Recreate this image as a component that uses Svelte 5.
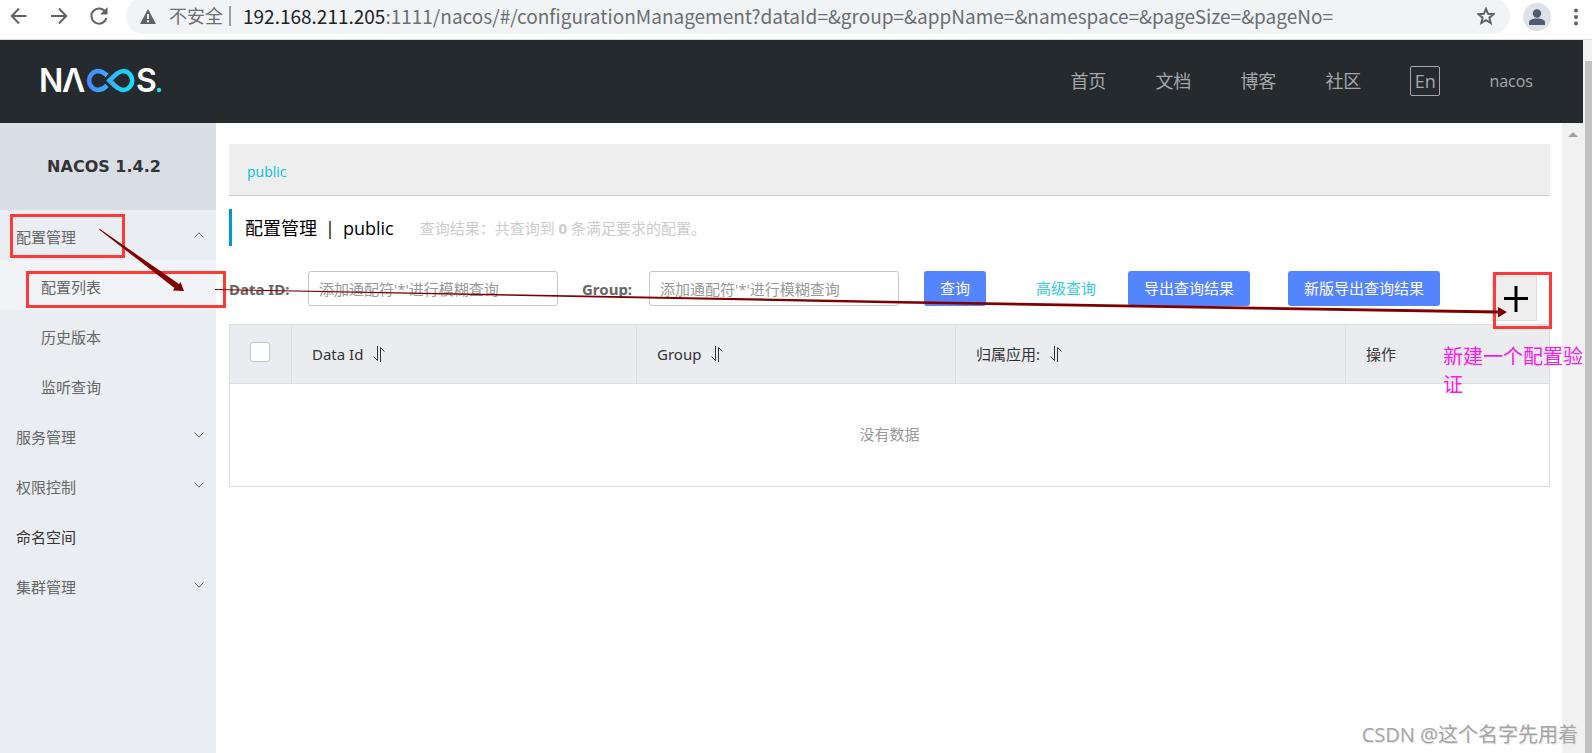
<script>
	const navLinks = ['首页', '文档', '博客', '社区'];

	const menu = [
		{ label: '配置管理', open: true, children: ['配置列表', '历史版本', '监听查询'] },
		{ label: '服务管理', children: [] },
		{ label: '权限控制', children: [] },
		{ label: '命名空间', leaf: true },
		{ label: '集群管理', children: [] }
	];

	const columns = [
		{ name: 'Data Id', cls: 'col-data', sortable: true },
		{ name: 'Group', cls: 'col-group', sortable: true },
		{ name: '归属应用:', cls: 'col-app', sortable: true },
		{ name: '操作', cls: 'col-action', sortable: false }
	];

	let activeItem = $state('配置列表');
	let dataId = $state('');
	let group = $state('');
	let allChecked = $state(false);
</script>

<div class="window">
	<div class="toolbar">
		<div class="tools">
			<button class="icon-btn" aria-label="后退">
				<svg width="18" height="18" viewBox="0 0 18 18"><path d="M16.5 9H2M9 1.5 1.8 9 9 16.5" /></svg>
			</button>
			<button class="icon-btn" aria-label="前进">
				<svg width="18" height="18" viewBox="0 0 18 18"><path d="M1 9h15M9 1.5 16.2 9 9 16.5" /></svg>
			</button>
			<button class="icon-btn" aria-label="刷新">
				<svg width="18" height="18" viewBox="0 0 18 18">
					<path d="M15.5 5A7.6 7.6 0 1 0 16.4 11" />
					<path class="solid" d="M17.5 0v7.5H10z" />
				</svg>
			</button>
		</div>
		<div class="address">
			<svg class="warn" width="16" height="15" viewBox="0 0 16 15">
				<path d="M8 0 16 15H0z" fill="#5f6368" />
				<path d="M8 5v5M8 11.2v2" stroke="#f1f3f4" stroke-width="2" />
			</svg>
			<span class="insecure">不安全</span>
			<span class="divider"></span>
			<span class="url"
				><b>192.168.211.205</b
				>:1111/nacos/#/configurationManagement?dataId=&amp;group=&amp;appName=&amp;namespace=&amp;pageSize=&amp;pageNo=</span
			>
			<button class="icon-btn star" aria-label="收藏">
				<svg width="18" height="18" viewBox="0 0 18 18">
					<path d="m9 1.8 2.1 5 5.4.4-4.1 3.5 1.3 5.3L9 13.2 4.3 16l1.3-5.3L1.5 7.2l5.4-.4z" />
				</svg>
			</button>
		</div>
		<button class="avatar" aria-label="用户">
			<svg width="28" height="28" viewBox="0 0 28 28">
				<circle cx="14" cy="10.5" r="4.2" />
				<path d="M6 22v-2.5c0-3 4-4 8-4s8 1 8 4V22z" />
			</svg>
		</button>
		<button class="icon-btn dots" aria-label="菜单">
			<svg width="6" height="18" viewBox="0 0 6 18">
				<circle cx="3" cy="2.5" r="2" /><circle cx="3" cy="9" r="2" /><circle cx="3" cy="15.5" r="2" />
			</svg>
		</button>
	</div>

	<div class="viewport">
		<div class="page">
			<header>
				<a class="logo" href="#/" aria-label="NACOS.">
					<svg width="130" height="60" viewBox="-4 -14 130 60">
						<defs>
							<linearGradient id="loop" gradientUnits="userSpaceOnUse" x1="46" y1="0" x2="95" y2="0">
								<stop offset="0" stop-color="#4a86ff" />
								<stop offset="1" stop-color="#14e3f4" />
							</linearGradient>
						</defs>
						<text x="-1" y="27">N</text>
						<text x="22" y="27">Λ</text>
						<g fill="none" stroke="url(#loop)" stroke-width="4.6">
							<path d="M67 10.5C63.5 7 61 6 57.3 6a9.6 9.6 0 0 0 0 19c3.7 0 6.2-1 9.7-4.5" />
							<path d="M69.5 15.5C76 9 79 6 84 6a9.6 9.6 0 0 1 0 19c-5 0-8-3-14.5-9.5z" />
						</g>
						<text x="96" y="27">S</text>
						<circle cx="119" cy="25" r="2.2" fill="#14e3f4" />
					</svg>
				</a>
				<nav>
					{#each navLinks as link}
						<a href="#/">{link}</a>
					{/each}
					<button class="lang">En</button>
					<a class="user" href="#/">nacos</a>
				</nav>
			</header>

			<div class="body">
				<aside>
					<h1>NACOS 1.4.2</h1>
					<ul>
						{#each menu as item}
							<li>
								<button class="item" class:leaf={item.leaf}>
									{item.label}
									{#if !item.leaf}
										<svg class="chevron" width="10" height="6" viewBox="0 0 10 6">
											<path d={item.open ? 'M.5 5.5 5 .8l4.5 4.7' : 'M.5.5 5 5.2 9.5.5'} />
										</svg>
									{/if}
								</button>
								{#if item.open}
									{#each item.children as child}
										<button
											class="item sub"
											class:active={child === activeItem}
											onclick={() => (activeItem = child)}>{child}</button
										>
									{/each}
								{/if}
							</li>
						{/each}
					</ul>
				</aside>

				<main>
					<div class="namespaces"><a href="#/">public</a></div>

					<div class="title">
						<h2>配置管理<i>|</i>public</h2>
						<span>查询结果：共查询到 <strong>0</strong> 条满足要求的配置。</span>
					</div>

					<form class="search" onsubmit={(e) => e.preventDefault()}>
						<div class="field">
							<label for="dataId">Data ID:</label>
							<input id="dataId" type="text" placeholder="添加通配符'*'进行模糊查询" bind:value={dataId} />
						</div>
						<div class="field">
							<label for="group">Group:</label>
							<input id="group" type="text" placeholder="添加通配符'*'进行模糊查询" bind:value={group} />
						</div>
						<button class="primary" type="submit">查询</button>
						<a class="advanced" href="#/">高级查询</a>
						<button class="primary" type="button">导出查询结果</button>
						<button class="primary next" type="button">新版导出查询结果</button>
						<button class="add" type="button" aria-label="新建配置">
							<svg width="26" height="26" viewBox="0 0 26 26"><path d="M14 0v26M2 12.5h24" /></svg>
						</button>
					</form>

					<table>
						<thead>
							<tr>
								<th class="col-check">
									<input type="checkbox" aria-label="全选" bind:checked={allChecked} />
								</th>
								{#each columns as col}
									<th class={col.cls}>
										{col.name}
										{#if col.sortable}
											<svg class="sort" width="14" height="16" viewBox="0 0 14 16">
												<path d="M5.5 0v14.5L1.5 10.5M8.5 16V1.5L12.5 5.5" />
											</svg>
										{/if}
									</th>
								{/each}
							</tr>
						</thead>
						<tbody>
							<tr><td colspan="5">没有数据</td></tr>
						</tbody>
					</table>
				</main>

				<div class="inner-scroll"><span class="up"></span></div>
			</div>
		</div>
		<div class="outer-scroll"><div class="thumb"></div></div>
	</div>

	<!-- hand-drawn marks on top of the page -->
	<svg class="marks" width="1592" height="753" viewBox="0 0 1592 753">
		<g fill="none" stroke="#ff3838" stroke-width="3">
			<rect x="11.5" y="215.5" width="112" height="41" />
			<rect x="27.5" y="272.5" width="197" height="34" />
			<rect x="1494.5" y="273.5" width="56" height="54" />
		</g>
		<g fill="#800000">
			<path d="M99 229.5 99.6 228.8 179 284l1.5-2L184 291l-11-.5 1.5-2.5z" />
			<path d="M215 289v1L900 303.5 1498 313.5v4l9-5.5-9-5v3.5L900 301z" />
		</g>
	</svg>
	<p class="note">新建一个配置验证</p>
	<p class="watermark">CSDN @这个名字先用着</p>
</div>

<style>
	:global(body) {
		margin: 0;
		overflow: hidden;
	}

	.window {
		position: relative;
		display: flex;
		flex-direction: column;
		height: 100vh;
		overflow: hidden;
		background: #fff;
		color: #333;
		font-family: 'Open Sans', 'Noto Sans CJK SC', sans-serif;
		font-size: 15px;
		line-height: 20px;
	}

	.window * {
		box-sizing: border-box;
	}

	button {
		padding: 0;
		border: 0;
		background: none;
		color: inherit;
		font: inherit;
		cursor: pointer;
	}

	a {
		color: inherit;
		text-decoration: none;
	}

	svg {
		display: block;
	}

	/* browser toolbar */
	.toolbar {
		display: flex;
		flex: none;
		height: 40px;
		padding: 0 13px 0 10px;
		border-bottom: 1px solid #dcdee2;
	}

	.tools {
		display: flex;
		gap: 22px;
		height: 32px;
		margin-right: 18px;
	}

	.icon-btn svg {
		fill: none;
		stroke: #5f6368;
		stroke-width: 2;
	}

	.icon-btn .solid {
		fill: #5f6368;
		stroke: none;
	}

	.address {
		display: flex;
		flex: 1;
		align-items: center;
		height: 36px;
		margin-top: -2px;
		padding: 0 15px 0 14px;
		border-radius: 18px;
		background: #f1f3f4;
		color: #6b6e72;
		white-space: nowrap;
	}

	.warn {
		margin-right: 13px;
	}

	.insecure {
		font-size: 18px;
	}

	.divider {
		width: 2px;
		height: 20px;
		margin: 0 12px 0 6px;
		background: #9a9da1;
	}

	.url {
		flex: 1;
		font-family: 'Noto Sans CJK SC', sans-serif;
		font-size: 19px;
	}

	.url b {
		color: #202124;
		font-weight: 400;
	}

	.avatar {
		width: 28px;
		height: 28px;
		margin: 3px 22px 0 13px;
		border-radius: 14px;
		background: #dee1e6;
		fill: #505b70;
	}

	.dots {
		height: 34px;
	}

	.dots svg {
		fill: #5f6368;
		stroke: none;
	}

	/* page */
	.viewport {
		display: flex;
		flex: 1;
		min-height: 0;
	}

	.page {
		display: flex;
		flex: 1;
		flex-direction: column;
		min-width: 0;
	}

	header {
		display: flex;
		flex: none;
		align-items: center;
		justify-content: space-between;
		height: 83px;
		padding: 0 50px 2px 36px;
		background: #252a2f;
	}

	.logo text {
		fill: #fff;
		font-family: Inter, sans-serif;
		font-size: 32px;
		font-weight: 600;
	}

	nav {
		display: flex;
		align-items: center;
		gap: 49px;
		color: #a5a8ab;
		font-size: 18px;
	}

	.lang {
		width: 30px;
		height: 30px;
		border: 1px solid #a5a8ab;
		border-radius: 2px;
		line-height: 26px;
	}

	.user {
		font-size: 16px;
	}

	.body {
		display: flex;
		flex: 1;
		min-height: 0;
	}

	aside {
		flex: none;
		width: 216px;
		background: #eaedf2;
	}

	h1 {
		margin: 0;
		padding-right: 8px;
		background: #d9dde4;
		font-family: 'DejaVu Sans', sans-serif;
		font-size: 16px;
		line-height: 87px;
		text-align: center;
	}

	ul {
		margin: 0;
		padding: 0;
		list-style: none;
	}

	.item {
		display: flex;
		align-items: center;
		justify-content: space-between;
		width: 100%;
		height: 50px;
		padding: 4px 12px 0 16px;
		color: #666;
		text-align: left;
	}

	.leaf {
		color: #333;
	}

	.sub {
		padding-left: 41px;
	}

	.active {
		background: #f2f3f7;
	}

	.chevron {
		margin-bottom: 4px;
		fill: none;
		stroke: #666;
	}

	main {
		flex: 1;
		min-width: 0;
		padding: 21px 12px 0 13px;
	}

	.namespaces {
		height: 52px;
		padding: 18px;
		border-bottom: 1px solid #ccc;
		background: #eee;
		color: #00c1de;
		font-size: 14px;
	}

	.title {
		display: flex;
		align-items: center;
		gap: 26px;
		height: 37px;
		margin: 13px 0 25px;
		padding-left: 13px;
		border-left: 3px solid #09c;
		color: #ccc;
	}

	h2 {
		margin: 0;
		color: #000;
		font-size: 18px;
		font-weight: 400;
	}

	h2 i {
		margin: 0 8px;
		font-style: normal;
	}

	.search {
		display: flex;
		align-items: flex-start;
		margin-bottom: 3px;
	}

	.field {
		display: flex;
		align-items: center;
		justify-content: space-between;
		width: 329px;
		margin-right: 24px;
	}

	.field + .field {
		width: 317px;
		margin-right: 25px;
	}

	label {
		color: #666;
		font-family: 'Noto Sans', sans-serif;
		font-weight: 700;
	}

	input[type='text'] {
		width: 250px;
		height: 35px;
		padding: 0 10px;
		border: 1px solid #c4c6cf;
		border-radius: 3px;
		font: inherit;
	}

	input::placeholder {
		color: #999;
		opacity: 1;
	}

	.primary {
		height: 35px;
		padding: 0 16px 2px;
		border-radius: 3px;
		background: #5584ff;
		color: #fff;
	}

	.next {
		margin-left: 38px;
	}

	.advanced {
		margin: 0 32px 0 50px;
		color: #33cde5;
		line-height: 35px;
	}

	.add {
		width: 45px;
		height: 45px;
		margin: 5px 13px 0 auto;
		padding: 9px;
		border: 1px solid #ddd;
		background: #eee;
		stroke: #000;
		stroke-width: 3;
	}

	table {
		width: 100%;
		border-collapse: collapse;
		table-layout: fixed;
	}

	th,
	td {
		border: 1px solid #dcdee3;
	}

	th {
		height: 59px;
		padding: 0 20px;
		background: #ebecf0;
		font-family: 'Noto Sans', 'Noto Sans CJK SC', sans-serif;
		font-weight: 400;
		text-align: left;
	}

	.col-check {
		width: 62px;
	}

	.col-data {
		width: 345px;
	}

	.col-group {
		width: 319px;
	}

	.col-action {
		width: 204px;
	}

	.sort {
		display: inline-block;
		margin-left: 5px;
		vertical-align: -2px;
		fill: none;
		stroke: #333;
	}

	input[type='checkbox'] {
		display: block;
		width: 20px;
		height: 20px;
		margin: 0 0 4px;
		border: 1px solid #c4c6cf;
		border-radius: 3px;
		background: #fff;
		appearance: none;
	}

	input[type='checkbox']:checked {
		background: #5584ff;
	}

	td {
		height: 103px;
		padding-bottom: 3px;
		color: #999;
		text-align: center;
	}

	/* scrollbars */
	.inner-scroll {
		display: flex;
		flex: none;
		justify-content: center;
		width: 21px;
		padding-top: 9px;
		background: #f1f1f1;
	}

	.up {
		width: 0;
		height: 0;
		border: 5px solid transparent;
		border-top: 0;
		border-bottom-color: #a3a3a3;
	}

	.outer-scroll {
		flex: none;
		width: 9px;
		padding: 21px 0 0 2px;
		background: #f1f1f1;
	}

	.thumb {
		height: 100%;
		background: #c1c1c1;
	}

	.marks {
		position: absolute;
		top: 0;
		left: 0;
		pointer-events: none;
	}

	.note {
		position: absolute;
		top: 343px;
		right: 9px;
		width: 140px;
		margin: 0;
		color: #f818f0;
		font-size: 20px;
		line-height: 28px;
	}

	.watermark {
		position: absolute;
		right: 14px;
		bottom: 4px;
		margin: 0;
		color: #a6a6a6;
		font-size: 20px;
		line-height: 28px;
		text-shadow: 1px 1px 0 #e4e4e4;
	}
</style>
